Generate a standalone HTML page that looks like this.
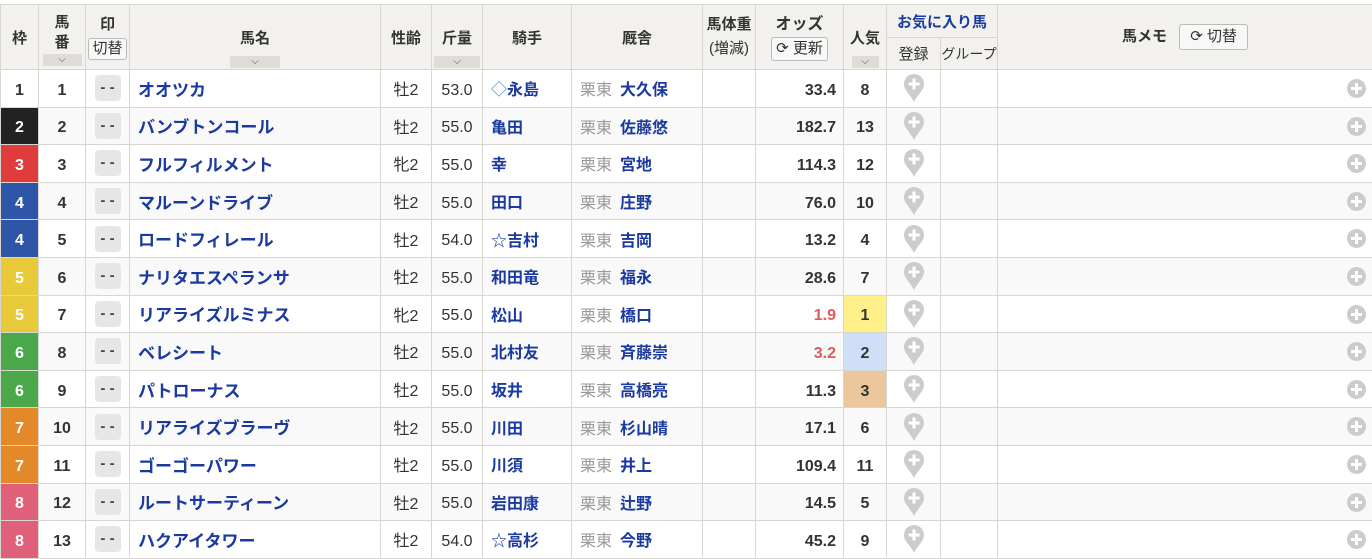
<!DOCTYPE html>
<html><head><meta charset="utf-8"><style>
body{margin:0;background:#fff;font-family:"Liberation Sans","Noto Sans CJK JP",sans-serif;color:#333;}
table{position:absolute;left:0;top:4px;border-collapse:collapse;table-layout:fixed;width:1373px;}
td,th{border:1px solid #d8d6d0;padding:0;text-align:center;vertical-align:middle;font-size:16px;white-space:nowrap;overflow:hidden;}
th{background:#f2f1ed;font-weight:bold;color:#333;font-size:15px;}
tr.h1 th{height:32px}
tr.h2 th{height:31px}
tbody tr{height:37.6px}
tbody tr:nth-child(even) td{background:#f9f9f9}
td.l{padding-top:5px}
.sort{display:block;margin:5px auto 0;height:12px;background:#dedcd6;font-size:10px;line-height:12px;color:#555;font-weight:normal}
.btn{display:inline-block;border:1px solid #bbb;border-radius:3px;background:#f8f8f8;font-weight:normal;font-size:15px;padding:2px 4px;color:#333;line-height:18px}
.wk{font-weight:bold;color:#fff}
.num{font-weight:bold}
.mark{display:inline-block;width:26px;height:26px;background:#e6e6e6;border-radius:4px;line-height:26px;font-weight:bold;font-size:15px;color:#444;vertical-align:middle}
.nm{text-align:left;padding-left:8px;color:#1a3aa0;font-weight:bold;font-size:17px}
.jk{text-align:left;padding-left:8px;color:#1a3aa0;font-weight:bold}
.tr{text-align:left;padding-left:8px;color:#1a3aa0;font-weight:bold}
.tr span{color:#999;font-weight:normal;margin-right:8px}
.od{text-align:right;padding-right:7px;font-weight:bold;font-size:16px}
.red{color:#e05a5a}
.plus{display:inline-block;width:19px;height:19px;border-radius:50%;background:#ccc;position:absolute;right:6px;top:9px}
.plus:before{content:"";position:absolute;left:4px;top:8px;width:11px;height:3px;background:#fff}
.plus:after{content:"";position:absolute;left:8px;top:4px;width:3px;height:11px;background:#fff}
svg{vertical-align:middle}
</style></head><body>
<table>
<colgroup><col style="width:38px"><col style="width:47px"><col style="width:44px"><col style="width:251px"><col style="width:51px"><col style="width:51px"><col style="width:89px"><col style="width:131px"><col style="width:53px"><col style="width:88px"><col style="width:43px"><col style="width:54px"><col style="width:57px"><col></colgroup>
<thead>
<tr class="h1"><th rowspan="2">枠</th><th rowspan="2" style="line-height:20px;padding-top:4px">馬<br>番<span class="sort" style="width:39px;margin-top:1px">⌵</span></th><th rowspan="2" style="line-height:24px">印<br><span class="btn" style="padding:1px 3px">切替</span></th><th rowspan="2" style="padding-top:20px">馬名<span class="sort" style="width:50px;margin-top:8px">⌵</span></th><th rowspan="2">性齢</th><th rowspan="2" style="padding-top:20px">斤量<span class="sort" style="width:46px;margin-top:8px">⌵</span></th><th rowspan="2">騎手</th><th rowspan="2">厩舎</th><th rowspan="2" style="line-height:24px">馬体重<br><span style="font-weight:normal">(増減)</span></th><th rowspan="2" style="font-size:16px;line-height:24px">オッズ<br><span class="btn">⟳ 更新</span></th><th rowspan="2" style="padding-top:20px">人気<span class="sort" style="width:27px;margin-top:8px">⌵</span></th><th colspan="2" style="color:#1a3aa0">お気に入り馬</th><th rowspan="2">馬メモ <span class="btn" style="margin-left:8px;padding:3px 10px">⟳ 切替</span></th></tr>
<tr class="h2"><th style="font-weight:normal">登録</th><th style="font-weight:normal;font-size:14px">グループ</th></tr>
</thead>
<tbody id="b"></tbody></table>
<script>
var d=[[1,1,"オオツカ","牡2","53.0","◇永島","大久保","33.4",8],[2,2,"バンブトンコール","牡2","55.0","亀田","佐藤悠","182.7",13],[3,3,"フルフィルメント","牝2","55.0","幸","宮地","114.3",12],[4,4,"マルーンドライブ","牡2","55.0","田口","庄野","76.0",10],[4,5,"ロードフィレール","牡2","54.0","☆吉村","吉岡","13.2",4],[5,6,"ナリタエスペランサ","牡2","55.0","和田竜","福永","28.6",7],[5,7,"リアライズルミナス","牝2","55.0","松山","橋口","1.9",1],[6,8,"ベレシート","牡2","55.0","北村友","斉藤崇","3.2",2],[6,9,"パトローナス","牡2","55.0","坂井","高橋亮","11.3",3],[7,10,"リアライズブラーヴ","牡2","55.0","川田","杉山晴","17.1",6],[7,11,"ゴーゴーパワー","牡2","55.0","川須","井上","109.4",11],[8,12,"ルートサーティーン","牡2","55.0","岩田康","辻野","14.5",5],[8,13,"ハクアイタワー","牡2","54.0","☆高杉","今野","45.2",9]];
var wc={1:["#fff","#333"],2:["#222","#fff"],3:["#e03c3c","#fff"],4:["#2f55a8","#fff"],5:["#e8c93a","#fff"],6:["#4aa84a","#fff"],7:["#e3892a","#fff"],8:["#e0607a","#fff"]};
var pc={1:"#fff08a",2:"#cfdff8",3:"#ecc79c"};
var h="";
d.forEach(function(r){var c=wc[r[0]];var p=pc[r[8]];
var jk=r[5].replace("◇",'<span style="color:#2b8fd8;font-weight:normal">◇</span>').replace("☆",'<span style="font-weight:normal">☆</span>');
h+='<tr><td class="wk l" style="background:'+c[0]+';color:'+c[1]+'">'+r[0]+'</td><td class="num l">'+r[1]+'</td><td><span class="mark">- -</span></td><td class="nm">'+r[2]+'</td><td>'+r[3]+'</td><td class="l">'+r[4]+'</td><td class="jk">'+jk+'</td><td class="tr"><span>栗東</span>'+r[6]+'</td><td></td><td class="od l'+(r[8]<3?' red':'')+'">'+r[7]+'</td><td class="num l" style="font-size:16px'+(p?';background:'+p:'')+'">'+r[8]+'</td><td><svg width="22" height="30" viewBox="0 0 22 30"><path d="M11 1a10 10 0 0 1 10 10c0 6-6 10-10 18C7 21 1 17 1 11A10 10 0 0 1 11 1z" fill="#ccc"/><rect x="5.5" y="9.5" width="11" height="3" fill="#fff"/><rect x="9.5" y="5.5" width="3" height="11" fill="#fff"/></svg></td><td></td><td style="position:relative"><span class="plus"></span></td></tr>';});
document.getElementById("b").innerHTML=h;
</script>
</body></html>
